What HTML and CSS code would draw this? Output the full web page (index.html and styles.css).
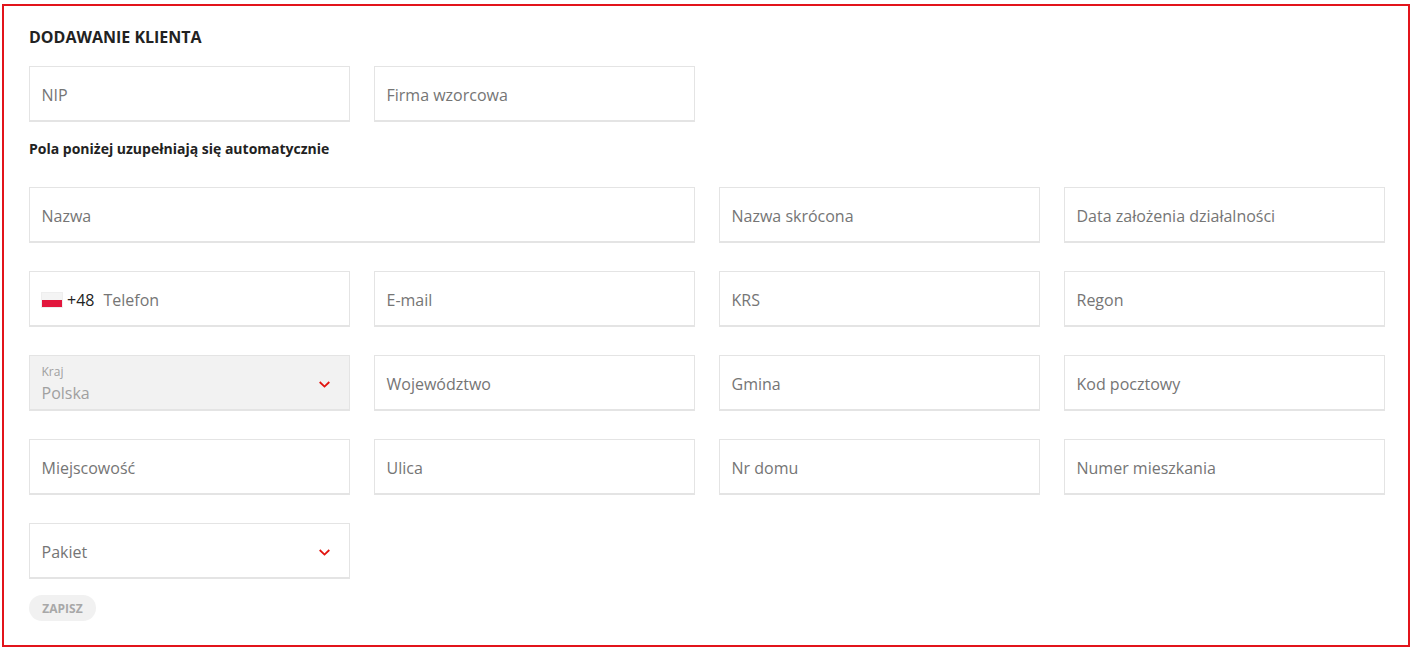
FILE: index.html
```html
<!DOCTYPE HTML>
<html>
<head>
<meta charset="utf-8">
<title>Dodawanie klienta</title>
<link rel="stylesheet" href="styles.css">
</head>
<body>

<div class="frame">
<h1 class="title">DODAWANIE KLIENTA</h1>

<div class="form_row">
	<div class="field">NIP</div>
	<div class="field">Firma wzorcowa</div>
</div>

<p class="note">Pola poniżej uzupełniają się automatycznie</p>

<div class="form_grid">
	<div class="field wide">Nazwa</div>
	<div class="field">Nazwa skrócona</div>
	<div class="field">Data założenia działalności</div>

	<div class="field">
		<span class="flag"></span>
		<span class="prefix">+48</span>
		<span>Telefon</span>
	</div>
	<div class="field">E-mail</div>
	<div class="field">KRS</div>
	<div class="field">Regon</div>

	<div class="field select disabled">
		<div class="select_value">
			<span class="small_label">Kraj</span>
			<span>Polska</span>
		</div>
		<svg class="arrow" width="11" height="7" viewBox="0 0 11 7"><path d="M.7 1l4.8 4.6L10.300 1" fill="none" stroke="#e2140f" stroke-width="1.800"/></svg>
	</div>
	<div class="field">Województwo</div>
	<div class="field">Gmina</div>
	<div class="field">Kod pocztowy</div>

	<div class="field">Miejscowość</div>
	<div class="field">Ulica</div>
	<div class="field">Nr domu</div>
	<div class="field">Numer mieszkania</div>

	<div class="field select">
		<span>Pakiet</span>
		<svg class="arrow" width="11" height="7" viewBox="0 0 11 7"><path d="M.7 1l4.8 4.6L10.300 1" fill="none" stroke="#e2140f" stroke-width="1.800"/></svg>
	</div>
</div>

<button class="save" disabled>ZAPISZ</button>
</div>

</body>
</html>
```

FILE: styles.css
```css
html {
	background-color:#ffffff;
	font-family:"Open Sans",sans-serif;
}
body {
	margin:0;
	padding:4px 7px 4px 2px;
}
.frame {
	border:2px solid #e2141b;
	padding:20px 23px 24px 25px;
}
.title {
	font-size:16px;
	line-height:22px;
	font-weight:700;
	color:#222222;
	margin:0 0 18px 0;
}
.note {
	font-size:14px;
	line-height:20px;
	font-weight:700;
	color:#222222;
	margin:17px 0 28px 0;
}
.form_row,
.form_grid {
	display:grid;
	grid-template-columns:repeat(4,321px);
	column-gap:24px;
}
.form_grid {
	row-gap:28px;
}
.field {
	display:flex;
	align-items:center;
	box-sizing:border-box;
	height:56px;
	padding:2px 12px 0 11.5px;
	border:1px solid #e4e4e4;
	border-bottom-width:2px;
	background-color:#ffffff;
	font-size:16px;
	color:#757575;
}
.wide {
	grid-column:span 2;
}
.flag {
	width:20px;
	height:14px;
	margin:0 5px 0 0.5px;
	background:linear-gradient(#f4f4f4 50%,#e2173d 50%);
	box-shadow:0 0 0 1px #eeeeee;
}
.prefix {
	color:#222222;
	margin-right:9px;
}
.select {
	justify-content:space-between;
	padding-right:19px;
}
.arrow {
	margin-top:1px;
}
.select_value {
	display:flex;
	flex-direction:column;
	margin-top:1px;
}
.small_label {
	font-size:12px;
	line-height:14px;
	margin-bottom:3px;
}
.select_value span:last-child {
	line-height:22px;
}
.disabled {
	background-color:#f2f2f2;
	color:#a0a0a0;
}
.save {
	display:block;
	width:67px;
	height:26px;
	margin-top:16px;
	padding:0;
	border:none;
	border-radius:13px;
	background-color:#f1f1f1;
	color:#a8a8a8;
	font-family:"Open Sans",sans-serif;
	font-size:12px;
	font-weight:700;
}
```
